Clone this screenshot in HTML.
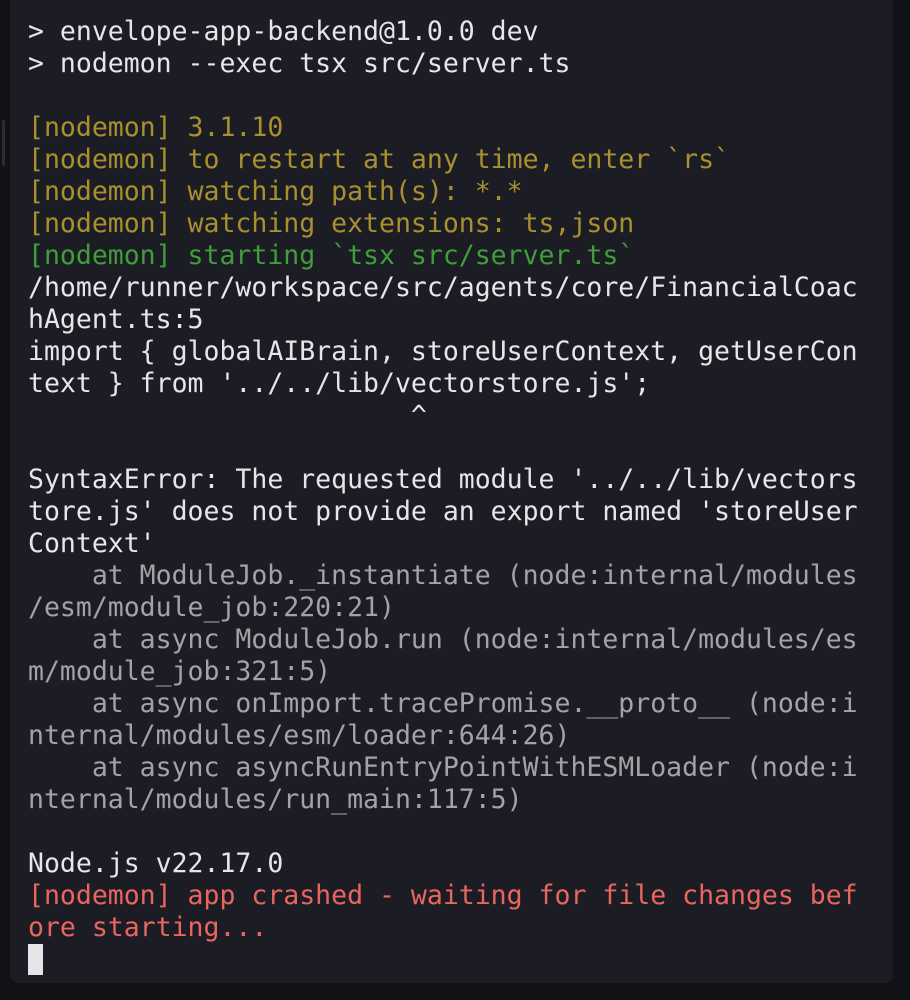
<!DOCTYPE html>
<html><head><meta charset="utf-8"><style>
html,body{margin:0;padding:0;background:#111216;width:910px;height:1000px;overflow:hidden}
.panel{position:absolute;left:10px;top:-20px;width:883px;height:1003px;background:#1c1d24;border-radius:8px}
.sb{position:absolute;left:2px;top:120px;width:3px;height:46px;background:#2c2d33;border-radius:2px}
pre{position:absolute;left:28px;top:16px;margin:0;font-family:"DejaVu Sans Mono","Liberation Mono",monospace;font-size:26.5px;line-height:32px;color:#e6e6e8;white-space:pre}
.y{color:#a8902f}.g{color:#3f9e3a}.r{color:#e8665f}.d{color:#a3a3a6}
.cur{display:inline-block;width:15px;height:31px;background:#e6e6e8;vertical-align:top}
</style></head><body>
<div class="panel"></div><div class="sb"></div>
<pre>&gt; envelope-app-backend@1.0.0 dev
&gt; nodemon --exec tsx src/server.ts

<span class="y">[nodemon] 3.1.10
[nodemon] to restart at any time, enter `rs`
[nodemon] watching path(s): *.*
[nodemon] watching extensions: ts,json</span>
<span class="g">[nodemon] starting `tsx src/server.ts`</span>
/home/runner/workspace/src/agents/core/FinancialCoac
hAgent.ts:5
import { globalAIBrain, storeUserContext, getUserCon
text } from '../../lib/vectorstore.js';
                        ^

SyntaxError: The requested module '../../lib/vectors
tore.js' does not provide an export named 'storeUser
Context'
<span class="d">    at ModuleJob._instantiate (node:internal/modules
/esm/module_job:220:21)
    at async ModuleJob.run (node:internal/modules/es
m/module_job:321:5)
    at async onImport.tracePromise.__proto__ (node:i
nternal/modules/esm/loader:644:26)
    at async asyncRunEntryPointWithESMLoader (node:i
nternal/modules/run_main:117:5)</span>

Node.js v22.17.0
<span class="r">[nodemon] app crashed - waiting for file changes bef
ore starting...</span>
<span class="cur"></span></pre>
</body></html>
